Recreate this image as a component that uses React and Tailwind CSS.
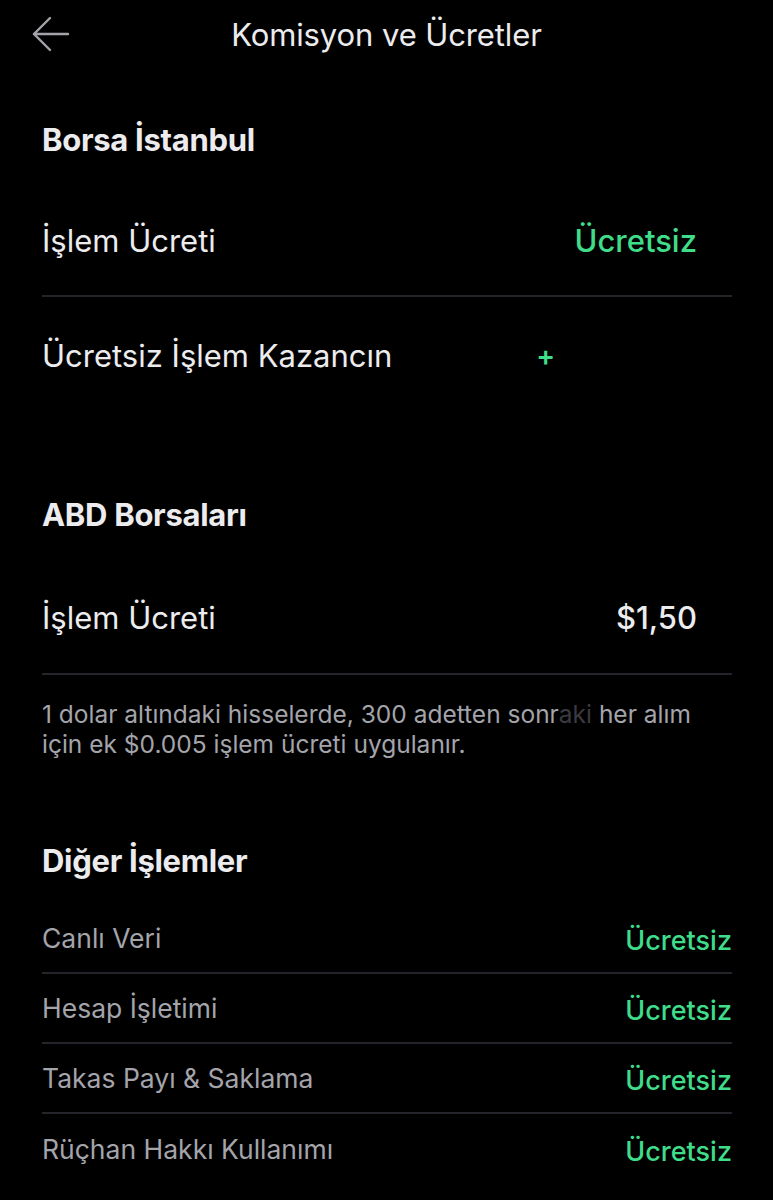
export default function App() {
  const font = { fontFamily: "Inter, 'Noto Sans', sans-serif" };
  return (
    <div className="w-[773px] h-[1200px] bg-black overflow-hidden" style={font}>
      <div className="relative h-[70px] flex items-center justify-center">
        <svg className="absolute left-[32px] top-[16px]" width="38" height="36" viewBox="0 0 38 36" fill="none" stroke="#a3a3ab" strokeWidth="2.4" strokeLinecap="round" strokeLinejoin="round">
          <path d="M36 18H2" />
          <path d="M18 2L2 18L18 34" />
        </svg>
        <div className="text-[31px] text-[#ececef] tracking-[-0.1px]">Komisyon ve Ücretler</div>
      </div>
      <div className="pl-[42px] pr-[41px]">
        <div className="mt-[46px] h-[48px] flex items-center text-[31px] font-bold text-[#ececef] tracking-[-0.3px]">Borsa İstanbul</div>
        <div className="mt-[23px] h-[110px] flex items-center justify-between border-b-2 border-[#24242b] pr-[35px]">
          <span className="text-[31px] text-[#ececef]">İşlem Ücreti</span>
          <span className="text-[31px] font-medium text-[#3fdc8a]">Ücretsiz</span>
        </div>
        <div className="h-[118px] flex items-center">
          <span className="text-[31px] text-[#ececef]">Ücretsiz İşlem Kazancın</span>
          <span className="ml-[144px] text-[28px] font-semibold text-[#3fdc8a]">+</span>
        </div>
        <div className="mt-[76px] h-[48px] flex items-center text-[31px] font-bold text-[#ececef] tracking-[-0.3px]">ABD Borsaları</div>
        <div className="mt-[24px] h-[112px] flex items-center justify-between border-b-2 border-[#24242b] pr-[35px]">
          <span className="text-[31px] text-[#ececef]">İşlem Ücreti</span>
          <span className="text-[31px] font-medium text-[#ececef]">$1,50</span>
        </div>
        <div className="mt-[24px] text-[24.5px] leading-[30px] text-[#a4a4ab]">
          1 dolar altındaki hisselerde, 300 adetten sonr<span className="text-[#3a3a40]">aki</span> her alım için ek $0.005 işlem ücreti uygulanır.
        </div>
        <div className="mt-[78px] h-[48px] flex items-center text-[31px] font-bold text-[#ececef] tracking-[-0.3px]">Diğer İşlemler</div>
        <div className="mt-[19px]">
          {["Canlı Veri", "Hesap İşletimi", "Takas Payı & Saklama", "Rüçhan Hakkı Kullanımı"].map((t, i) => (
            <div key={t} className={"h-[70px] flex items-center justify-between " + (i < 3 ? "border-b-2 border-[#24242b]" : "")}>
              <span className="text-[26.5px] text-[#a4a4ab] pt-[2px]">{t}</span>
              <span className="text-[27px] font-medium text-[#3fdc8a] pt-[6px]">Ücretsiz</span>
            </div>
          ))}
        </div>
      </div>
    </div>
  );
}
